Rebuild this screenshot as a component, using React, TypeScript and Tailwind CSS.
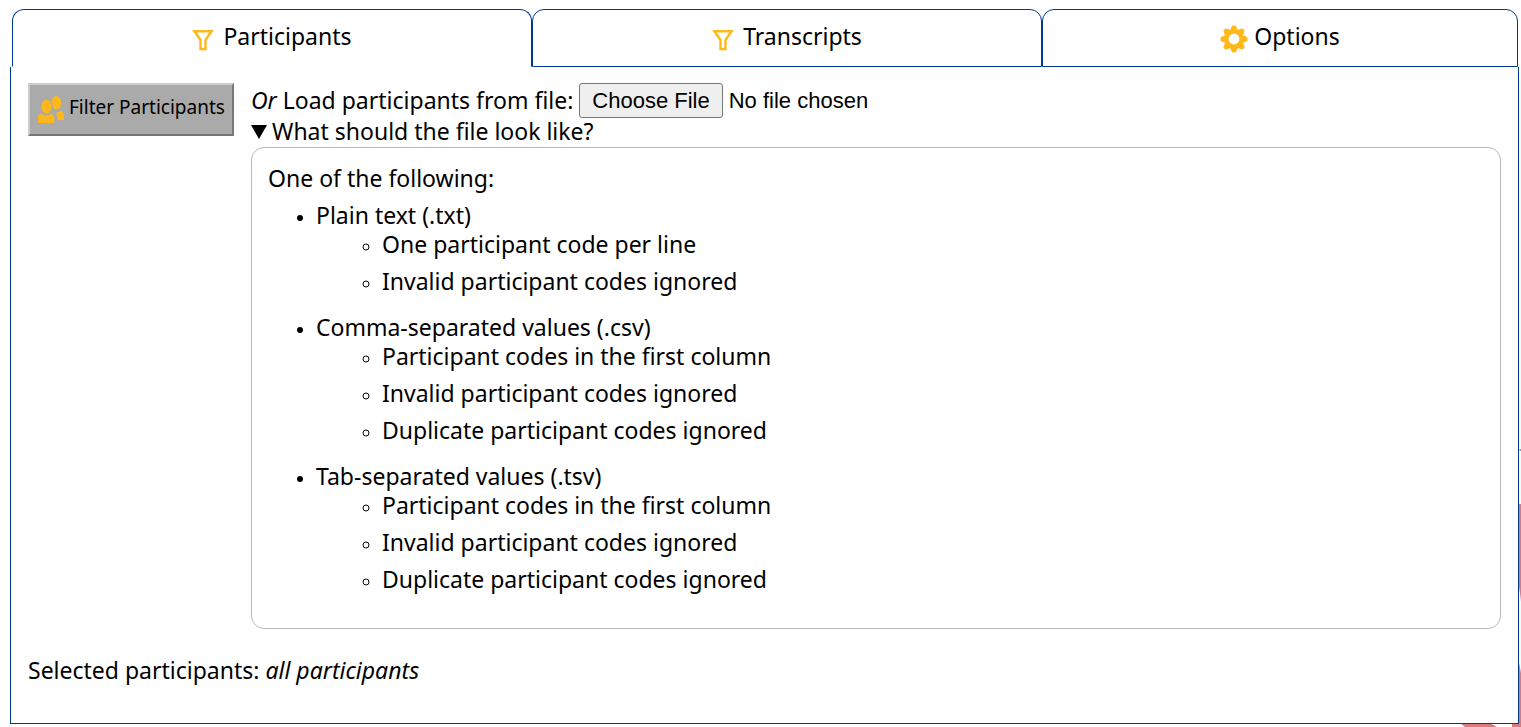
import { useState } from "react";

function FunnelIcon() {
  return (
    <svg viewBox="0 0 22 22" className="mt-1 size-[22px] shrink-0" fill="none" stroke="#ffb81c" strokeWidth="2.4" aria-hidden="true">
      <path d="M2.4 2.2H19.6L13.5 11V20H8.5V11Z" />
    </svg>
  );
}

function GearIcon() {
  return (
    <svg viewBox="-14 -14 28 28" className="mt-px size-7 shrink-0" fill="#ffb81c" aria-hidden="true">
      {[0, 45, 90, 135].map((angle) => (
        <path
          key={angle}
          transform={`rotate(${angle})`}
          d="M-4 -8.2L-2.4 -12.2Q-1.9 -13.5 -0.9 -13.5H0.9Q1.9 -13.5 2.4 -12.2L4 -8.2V8.2L2.4 12.2Q1.9 13.5 0.9 13.5H-0.9Q-1.9 13.5 -2.4 12.2L-4 8.2Z"
        />
      ))}
      <circle r="9.2" />
      <circle r="5.4" fill="#fff" />
    </svg>
  );
}

function PeopleIcon() {
  return (
    <svg viewBox="0 0 26 28" className="h-7 w-[26px] shrink-0" fill="#ffb81c" aria-hidden="true">
      <ellipse cx="18.3" cy="6.7" rx="4.9" ry="6.7" />
      <path d="M19.6 16.2Q22 16.5 23 14.3Q26 16.5 26 20V24H19.5Q19.5 20.5 18.2 18.5Z" />
      <ellipse cx="8.5" cy="10.8" rx="6.3" ry="7.9" fill="#aaa" />
      <ellipse cx="8.5" cy="10.6" rx="5.1" ry="6.9" />
      <path d="M0 27V22Q0 18.5 3.2 17.8Q8.3 21.8 13.2 17.8Q16.3 19 16.3 22.5V27Z" />
    </svg>
  );
}

const tabs = [
  { name: "Participants", icon: <FunnelIcon />, gap: "gap-[9px]" },
  { name: "Transcripts", icon: <FunnelIcon />, gap: "gap-[9px]" },
  { name: "Options", icon: <GearIcon />, gap: "gap-[6px]" },
];

const formats = [
  { name: "Plain text (.txt)", rules: ["One participant code per line", "Invalid participant codes ignored"] },
  {
    name: "Comma-separated values (.csv)",
    rules: ["Participant codes in the first column", "Invalid participant codes ignored", "Duplicate participant codes ignored"],
  },
  {
    name: "Tab-separated values (.tsv)",
    rules: ["Participant codes in the first column", "Invalid participant codes ignored", "Duplicate participant codes ignored"],
  },
];

export default function App() {
  const [active, setActive] = useState("Participants");
  return (
    <main className="relative min-h-screen overflow-hidden bg-white pt-[9px] pr-[2px] pb-[3px] pl-[10px] font-['Noto_Sans',sans-serif] text-[23px] leading-[29px] text-black">
      <svg className="absolute right-0 bottom-0 h-[280px] w-[61px]" viewBox="0 0 61 280" fill="#d97b7f" aria-hidden="true">
        <path d="M59 57H61V155Q60 145 59 140ZM59 216Q60 220 61 226V280H52V276H59ZM0 276H29Q34 278 37 280H5Z" />
        <path d="M59 2H61V4H60Z" fill="#999" />
      </svg>
      <div role="tablist" className="relative mr-px ml-[2px] grid grid-cols-[520fr_510fr_476fr]">
        {tabs.map((tab) => (
          <button
            key={tab.name}
            type="button"
            role="tab"
            aria-selected={active === tab.name}
            onClick={() => setActive(tab.name)}
            className={`flex h-[58px] items-center justify-center rounded-t-xl border border-[#003a93] bg-white ${tab.gap} ${active === tab.name ? "border-b-white" : ""}`}
          >
            {tab.icon}
            <span className="pb-1">{tab.name}</span>
          </button>
        ))}
      </div>
      <section className="relative border border-t-0 border-[#003a93] bg-white px-[17px] pt-4 pb-[38px]">
        <div className="flex items-start gap-[17px]">
          <button
            type="button"
            className="flex h-[53px] w-[206px] shrink-0 items-center gap-[5px] border-2 border-t-[#ccc] border-r-[#777] border-b-[#777] border-l-[#ccc] bg-[#aaa] pl-2 text-[19px] whitespace-nowrap"
          >
            <PeopleIcon />
            <span className="pb-1">Filter Participants</span>
          </button>
          <div className="min-w-0 flex-1">
            <div className="flex items-center gap-[6px]">
              <label htmlFor="participants-file">
                <em>Or</em> Load participants from file:
              </label>
              <input
                id="participants-file"
                type="file"
                className="h-[35px] w-[340px] font-['Liberation_Sans',sans-serif] text-[22px] leading-[25px] file:mr-[6px] file:h-[35px] file:rounded-[3px] file:border file:border-solid file:border-[#767676] file:bg-[#efefef] file:px-3"
              />
            </div>
            <details open>
              <summary className="flex list-none items-center gap-[5px] pb-[2px] leading-[27px]">
                <svg viewBox="0 0 16 14" className="h-[14px] w-4" aria-hidden="true">
                  <path d="M0 0H16L8 14Z" />
                </svg>
                What should the file look like?
              </summary>
              <div className="rounded-[13px] border border-[#bbb] px-4 pt-4 pb-[17px]">
                <p className="mb-2">One of the following:</p>
                <ul className="list-disc pl-12">
                  {formats.map((format) => (
                    <li key={format.name} className="mb-[9px] marker:text-[17px]">
                      {format.name}
                      <ul className="flow-root list-[circle] pl-[66px]">
                        {format.rules.map((rule) => (
                          <li key={rule} className="pb-2">
                            {rule}
                          </li>
                        ))}
                      </ul>
                    </li>
                  ))}
                </ul>
              </div>
            </details>
          </div>
        </div>
        <p className="mt-[27px]">
          Selected participants: <em>all participants</em>
        </p>
      </section>
    </main>
  );
}
